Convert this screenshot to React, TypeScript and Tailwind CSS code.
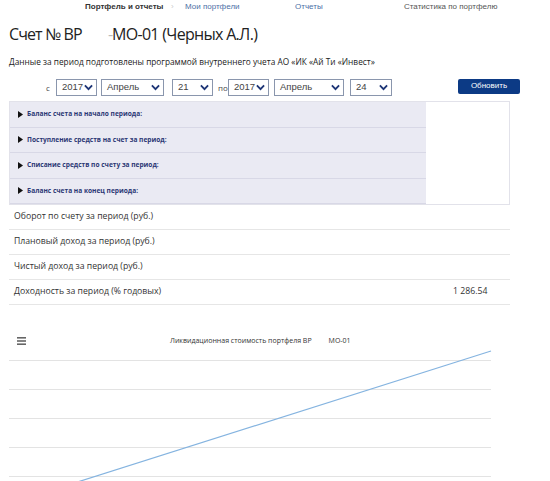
import React from 'react';

const Chevron: React.FC = () => (
  <svg width="9" height="7" viewBox="0 0 10 7" className="shrink-0">
    <path d="M1 1.2 L5 5.4 L9 1.2" fill="none" stroke="#1d3576" strokeWidth="2" />
  </svg>
);

const Select: React.FC<{ value: string; width: string }> = ({ value, width }) => (
  <div
    className={`flex h-[17px] shrink-0 ${width} items-center justify-between border border-[#8a96ad] bg-white pl-[5px] pr-[3px] text-[9.5px] text-[#444]`}
    style={{ fontFamily: '"Liberation Sans", Arial, sans-serif' }}
  >
    <span>{value}</span>
    <Chevron />
  </div>
);

const sections = [
  'Баланс счета на начало периода:',
  'Поступление средств на счет за период:',
  'Списание средств по счету за период:',
  'Баланс счета на конец периода:',
];

const stats: [string, string][] = [
  ['Оборот по счету за период (руб.)', ''],
  ['Плановый доход за период (руб.)', ''],
  ['Чистый доход за период (руб.)', ''],
  ['Доходность за период (% годовых)', '1 286.54'],
];

export default function App() {
  return (
    <div
      className="w-[550px] h-[481px] overflow-hidden bg-white text-[#222]"
      style={{ fontFamily: '"Open Sans", "Noto Sans", sans-serif' }}
    >
      {/* breadcrumbs / tabs */}
      <nav
        className="flex h-[13px] items-center text-[8px] leading-none"
        style={{ fontFamily: '"Liberation Sans", Arial, sans-serif' }}
      >
        <span className="ml-[85px] w-[86px] shrink-0 font-bold text-[#333]">Портфель и отчеты</span>
        <span className="w-[14px] shrink-0 text-[#ccc]">›</span>
        <span className="w-[110px] shrink-0 text-[#4d6fa6]">Мои портфели</span>
        <span className="w-[109px] shrink-0 text-[#4d6fa6]">Отчеты</span>
        <span className="shrink-0 text-[#555]">Статистика по портфелю</span>
      </nav>

      <h1 className="mt-[12px] flex pl-[9px] text-[16px] leading-[18px] text-[#222]">
        <span className="w-[99px] shrink-0 tracking-[-0.9px]">Счет № ВР</span>
        <span className="w-[4px] shrink-0 text-[#bbb]">-</span>
        <span className="tracking-[-0.7px]">МО-01 (Черных А.Л.)</span>
      </h1>

      <p className="mt-[14px] pl-[9px] text-[8.3px] leading-[10px] text-[#222]">
        Данные за период подготовлены программой внутреннего учета АО «ИК «Ай Ти «Инвест»
      </p>

      {/* period */}
      <div className="mt-[12px] flex h-[17px] items-center text-[8px] text-[#444]">
        <span className="ml-[46px] w-[10px] shrink-0">с</span>
        <Select value="2017" width="w-[41px]" />
        <div className="w-[4px] shrink-0" />
        <Select value="Апрель" width="w-[63px]" />
        <div className="w-[8px] shrink-0" />
        <Select value="21" width="w-[41px]" />
        <span className="ml-[5px] w-[10px] shrink-0">по</span>
        <Select value="2017" width="w-[41px]" />
        <div className="w-[5px] shrink-0" />
        <Select value="Апрель" width="w-[70px]" />
        <div className="w-[6px] shrink-0" />
        <Select value="24" width="w-[42px]" />
        <button
          className="ml-[66px] mb-[3px] h-[15px] w-[62px] shrink-0 rounded-[2px] bg-[#0c3a85] text-[8px] text-white"
          style={{ fontFamily: '"Liberation Sans", Arial, sans-serif' }}
        >
          Обновить
        </button>
      </div>

      {/* sections */}
      <div className="ml-[9px] mt-[5px] w-[501px] border border-[#e2e2ea]">
        {sections.map((s) => (
          <div key={s} className="flex h-[25.5px]">
            <div className="flex flex-1 items-center gap-[4px] border-b border-[#d8d8e6] bg-[#eaeaf3] pl-[8px] text-[6.6px] font-bold text-[#2c3875]">
              <svg width="5" height="7" viewBox="0 0 5 7">
                <path d="M0 0 L5 3.5 L0 7 Z" fill="#111" />
              </svg>
              <span>{s}</span>
            </div>
            <div className="w-[83px] bg-white" />
          </div>
        ))}
      </div>

      {/* stats */}
      <div className="ml-[9px] w-[501px]">
        {stats.map(([label, value]) => (
          <div key={label} className="flex h-[25px] items-center border-b border-[#e6e6e6] text-[8.7px] text-[#333]">
            <span className="w-[444px] pl-[5px]">{label}</span>
            <span>{value}</span>
          </div>
        ))}
      </div>

      {/* chart */}
      <div className="relative mt-[28px] h-[150px]">
        <div className="flex h-[16px] items-center">
          <svg width="9" height="8" viewBox="0 0 9 8" className="ml-[17px]">
            <rect x="0" y="0" width="9" height="1.6" fill="#666" />
            <rect x="0" y="3.2" width="9" height="1.6" fill="#666" />
            <rect x="0" y="6.4" width="9" height="1.6" fill="#666" />
          </svg>
          <span className="ml-[144px] text-[7px] text-[#333]">Ликвидационная стоимость портфеля ВР</span>
          <span className="ml-[17px] text-[7px] text-[#333]">МО-01</span>
        </div>
        <svg width="550" height="134" className="block">
          {[11, 40, 69, 98, 127].map((y) => (
            <line key={y} x1="9" x2="491" y1={y + 0.5} y2={y + 0.5} stroke="#e3e3e3" strokeWidth="1" />
          ))}
          <line x1="68" y1="136" x2="491" y2="2" stroke="#85b4e0" strokeWidth="1.2" />
        </svg>
      </div>
    </div>
  );
}
